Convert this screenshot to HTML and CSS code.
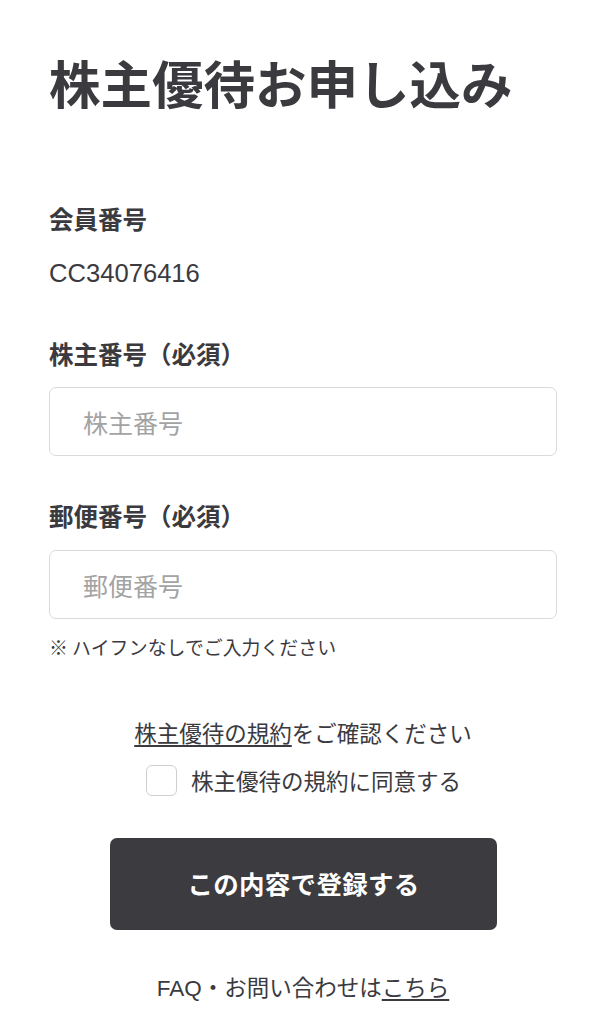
FILE: index.html
```html
<!DOCTYPE html>
<html lang="ja">
<head>
<meta charset="utf-8">
<title>株主優待お申し込み</title>
<link rel="stylesheet" href="styles.css">
</head>
<body>
<main class="page">
  <h1 class="title">株主優待お申し込み</h1>

  <div class="label label-first">会員番号</div>
  <div class="value">CC34076416</div>

  <label class="label label-field" for="holder">株主番号（必須）</label>
  <input class="input" id="holder" type="text" placeholder="株主番号">

  <label class="label label-field2" for="zip">郵便番号（必須）</label>
  <input class="input" id="zip" type="text" placeholder="郵便番号">
  <p class="hint">※ ハイフンなしでご入力ください</p>

  <p class="terms"><a class="link" href="#">株主優待の規約</a>をご確認ください</p>
  <label class="agree">
    <span class="checkbox"></span>
    <span class="agree-text">株主優待の規約に同意する</span>
  </label>

  <div class="actions">
    <button class="submit" type="button">この内容で登録する</button>
  </div>

  <p class="footer">FAQ・お問い合わせは<a class="link" href="#">こちら</a></p>
</main>
</body>
</html>
```

FILE: styles.css
```css
* {
  box-sizing: border-box;
}

html, body {
  margin: 0;
  padding: 0;
  background: #ffffff;
}

body {
  font-family: "Liberation Sans", "Noto Sans CJK JP", sans-serif;
  color: #38383d;
}

.page {
  width: 607px;
  padding: 52px 50px 0 49px;
  display: flex;
  flex-direction: column;
}

.title {
  margin: 0;
  font-family: "Noto Sans CJK JP", sans-serif;
  font-size: 51.5px;
  line-height: 60px;
  font-weight: 700;
  color: #3a3a3f;
  letter-spacing: 0;
}

.label {
  display: block;
  font-family: "Noto Sans CJK JP", sans-serif;
  font-size: 24.5px;
  line-height: 36px;
  font-weight: 700;
  color: #3a3a3f;
}

.label-first {
  margin-top: 88.6px;
}

.value {
  margin-top: 18.4px;
  font-size: 25.6px;
  line-height: 36px;
  color: #3a3a3f;
}

.label-field {
  margin-top: 44.6px;
}

.label-field2 {
  margin-top: 41.6px;
}

.input {
  display: block;
  width: 508px;
  height: 69px;
  margin-top: 15.6px;
  padding: 0 0 0 33px;
  border: 1.5px solid #dadada;
  border-radius: 7px;
  background: #fff;
  font-family: "Noto Sans CJK JP", sans-serif;
  font-size: 25px;
  color: #3a3a3f;
  outline: none;
}

.label-field2 + .input {
  margin-top: 16.4px;
}

.input::placeholder {
  color: #a3a3a3;
}

.hint {
  margin: 15px 0 0;
  font-family: "Noto Sans CJK JP", sans-serif;
  font-size: 18.9px;
  line-height: 26px;
  color: #3a3a3f;
}

.terms {
  margin: 55.7px 0 0;
  text-align: center;
  font-family: "Noto Sans CJK JP", sans-serif;
  font-size: 22.5px;
  line-height: 32px;
  color: #3a3a3f;
}

.link {
  color: inherit;
  text-decoration: underline;
  text-underline-offset: 3px;
  text-decoration-thickness: 1.5px;
}

.agree {
  margin-top: 16.3px;
  height: 32px;
  display: flex;
  align-items: center;
  justify-content: center;
  gap: 14px;
  padding-left: 1px;
}

.checkbox {
  width: 31px;
  height: 31px;
  border: 1.5px solid #cfcfcf;
  border-radius: 6px;
  background: #fff;
  flex: none;
}

.agree-text {
  font-family: "Noto Sans CJK JP", sans-serif;
  font-size: 22.5px;
  line-height: 32px;
  color: #3a3a3f;
}

.actions {
  margin-top: 42px;
  display: flex;
  justify-content: center;
  padding-left: 1px;
}

.submit {
  width: 387px;
  height: 92px;
  padding: 0 0 3px;
  border: 0;
  border-radius: 7px;
  background: #3c3b40;
  color: #ffffff;
  font-family: "Noto Sans CJK JP", sans-serif;
  font-size: 25.5px;
  font-weight: 700;
  letter-spacing: 0.3px;
  cursor: pointer;
}

.footer {
  margin: 39.7px 0 0;
  text-align: center;
  font-size: 22.5px;
  line-height: 32px;
  color: #3a3a3f;
}

.footer .link {
  font-family: "Noto Sans CJK JP", sans-serif;
}
```
